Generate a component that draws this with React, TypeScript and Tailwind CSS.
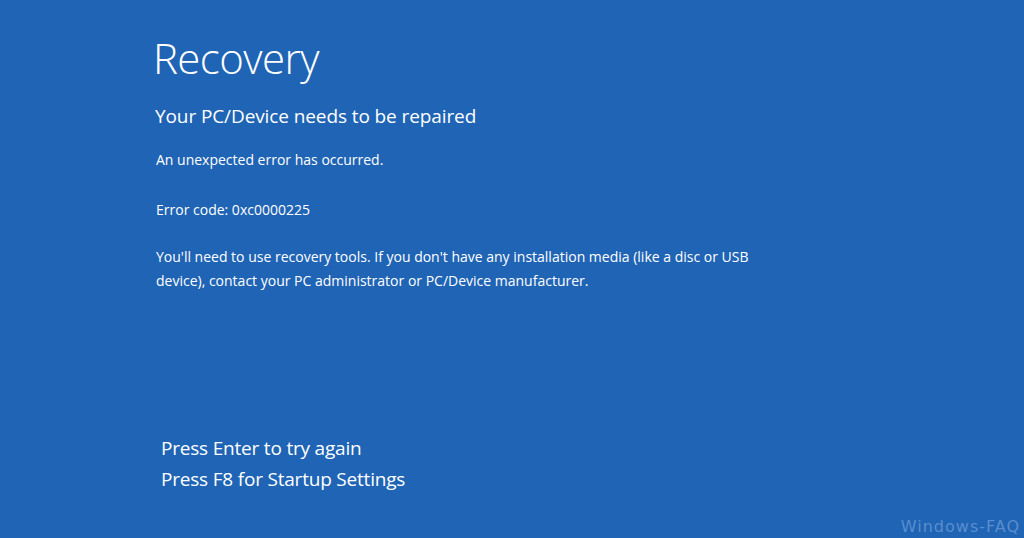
export default function App() {
  return (
    <div className="relative w-[1024px] h-[538px] overflow-hidden bg-[#1f64b5] text-white font-['Open_Sans',sans-serif]">
      <div className="flex flex-col pl-[153px] pt-[36px]">
        <h1 className="text-[42px] leading-[44px] font-light tracking-[-0.6px]">Recovery</h1>
        <h2 className="mt-[22px] pl-[2px] text-[19px] leading-[28px] font-normal tracking-[-0.1px]">
          Your PC/Device needs to be repaired
        </h2>
        <div className="pl-[3px] text-[14px] leading-[24px]">
          <p className="mt-[18px]">An unexpected error has occurred.</p>
          <p className="mt-[26px]">Error code: 0xc0000225</p>
          <p className="mt-[23px] w-[620px]">
            You'll need to use recovery tools. If you don't have any installation media (like a disc or USB
            device), contact your PC administrator or PC/Device manufacturer.
          </p>
        </div>
        <div className="mt-[140px] pl-[8px] text-[19px] leading-[31px] tracking-[-0.2px]">
          <p>Press Enter to try again</p>
          <p>Press F8 for Startup Settings</p>
        </div>
      </div>
      <span className="absolute right-[4px] bottom-[0px] text-[16px] leading-[22px] tracking-[1px] text-[#5a8dcd] font-['DejaVu_Sans',sans-serif]">
        Windows-FAQ
      </span>
    </div>
  )
}
